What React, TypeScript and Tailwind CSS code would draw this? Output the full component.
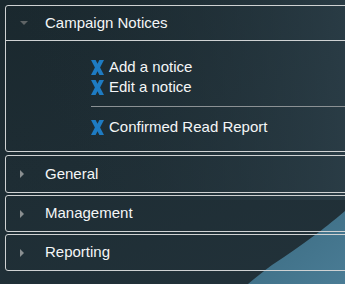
import React from "react";

function XIcon() {
  return (
    <svg width="13" height="15" viewBox="0 0 13 15" className="shrink-0">
      <path d="M0 0 H4.6 L6.5 3.7 L8.4 0 H13 L9.1 7.5 L13 15 H8.4 L6.5 11.3 L4.6 15 H0 L3.9 7.5 Z" fill="#1e7bc2" />
    </svg>
  );
}

function Caret({ open }: { open?: boolean }) {
  return open ? (
    <svg width="8" height="5" viewBox="0 0 8 5" className="shrink-0">
      <path d="M0 0 L8 0 L4 4 Z" fill="#5f6466" />
    </svg>
  ) : (
    <svg width="5" height="8" viewBox="0 0 5 8" className="shrink-0">
      <path d="M0 0 L4 4 L0 8 Z" fill="#8a8f91" />
    </svg>
  );
}

function Item({ label }: { label: string }) {
  return (
    <div className="flex items-center h-[20px] gap-[5px]">
      <XIcon />
      <span>{label}</span>
    </div>
  );
}

function Collapsed({ label, tall }: { label: string; tall?: boolean }) {
  return (
    <div
      className={
        tall
          ? "w-[360px] border border-[#cfd2d3] rounded-[3px] h-[38px] flex items-center"
          : "w-[360px] border border-[#cfd2d3] rounded-[3px] h-[37px] flex items-center"
      }
    >
      <div className="w-[39px] flex justify-end pr-[20px] pl-[15px]">
        <Caret />
      </div>
      <span>{label}</span>
    </div>
  );
}

export default function App() {
  return (
    <div
      className="relative w-[345px] h-[284px] overflow-hidden bg-[linear-gradient(160deg,#1a282e_0%,#1e2d34_45%,#22323a_100%)] text-[15px] text-[#f4f6f7]"
      style={{ fontFamily: '"Liberation Sans", Arial, sans-serif' }}
    >
      <svg className="absolute inset-0" width="345" height="284" viewBox="0 0 345 284">
        <defs>
          <linearGradient id="wedge" x1="0" y1="0" x2="1" y2="1">
            <stop offset="0" stopColor="#3a6a80" />
            <stop offset="1" stopColor="#4a7c95" />
          </linearGradient>
          <linearGradient id="top" x1="0" y1="0" x2="1" y2="0">
            <stop offset="0" stopColor="#1b292f" stopOpacity="0" />
            <stop offset="1" stopColor="#2c3f49" stopOpacity="0.8" />
          </linearGradient>
        </defs>
        <rect x="0" y="0" width="345" height="200" fill="url(#top)" />
        <path d="M345 211 C332 222 322 230 315 235 C300 246 287 255 272 265 C264 271 256 277 248 284 L345 284 Z" fill="url(#wedge)" />
      </svg>
      <div className="relative flex flex-col pt-[5px] pl-[5px] gap-[2px]">
        <div className="w-[360px] border border-[#cfd2d3] rounded-[3px] mb-[1px]">
          <div className="h-[35px] flex items-center border-b border-[#cfd2d3]">
            <div className="w-[39px] flex justify-start pl-[14px]">
              <Caret open />
            </div>
            <span>Campaign Notices</span>
          </div>
          <div className="pt-[16px] pb-[14px] pl-[85px]">
            <Item label="Add a notice" />
            <Item label="Edit a notice" />
            <div className="mt-[9px] mb-[10px] border-t border-[#8b9194]" />
            <Item label="Confirmed Read Report" />
          </div>
        </div>
        <Collapsed label="General" tall />
        <Collapsed label="Management" />
        <Collapsed label="Reporting" />
      </div>
    </div>
  );
}
